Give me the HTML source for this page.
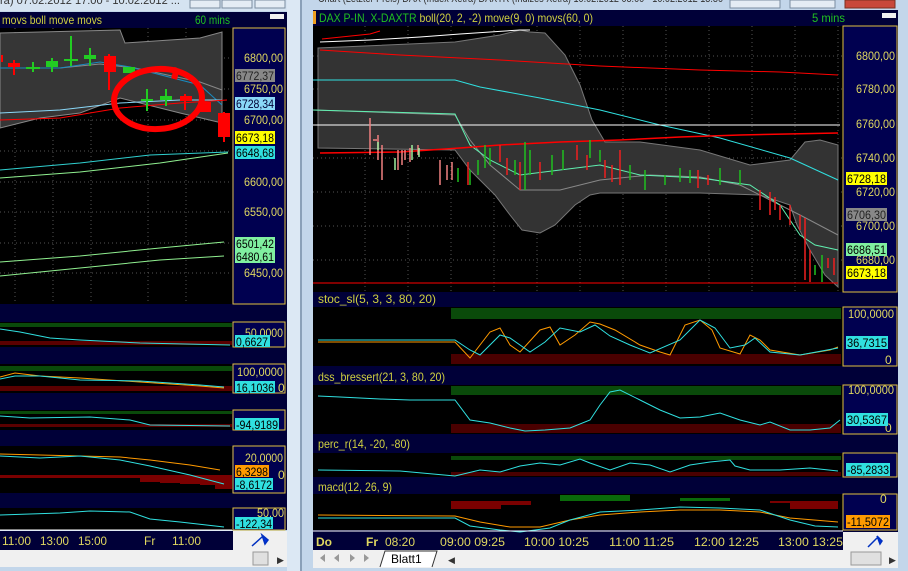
<!DOCTYPE html>
<html><head><meta charset="utf-8"><style>
html,body{margin:0;padding:0;width:908px;height:571px;overflow:hidden;background:#bfd3e8;font-family:"Liberation Sans",sans-serif}
svg{position:absolute;left:0;top:0}
text{font-family:"Liberation Sans",sans-serif}
</style></head><body>
<svg width="908" height="571" viewBox="0 0 908 571">
<rect x="0" y="0" width="908" height="571" fill="#c3d6ea"/>
<rect x="287" y="0" width="14" height="571" fill="#dce8f4"/>
<rect x="300" y="0" width="2" height="571" fill="#8aa0b8"/>
<rect x="898" y="0" width="10" height="571" fill="#c3d6ea"/>
<rect x="0" y="0" width="287" height="11" fill="#d5e3f1"/>
<text x="0" y="4" font-size="11" fill="#333" textLength="180" lengthAdjust="spacingAndGlyphs">ra) 07.02.2012 17:00 - 10.02.2012 ...</text>
<rect x="190" y="0" width="30" height="8" fill="#e4ecf4" stroke="#7a8ca0"/>
<rect x="222" y="0" width="30" height="8" fill="#e4ecf4" stroke="#7a8ca0"/>
<rect x="255" y="0" width="30" height="8" fill="#e4ecf4" stroke="#7a8ca0"/>
<text x="318" y="2" font-size="11" fill="#333" textLength="405" lengthAdjust="spacingAndGlyphs">Chart (Letzter Preis) DAX (Index Xetra) DAXTR (Indizes Xetra) 10.02.2012 08:00 - 10.02.2012 13:30</text>
<rect x="730" y="0" width="50" height="8" fill="#e4ecf4" stroke="#7a8ca0"/>
<rect x="790" y="0" width="45" height="8" fill="#e4ecf4" stroke="#7a8ca0"/>
<rect x="845" y="0" width="50" height="8" fill="#c8483a" stroke="#7a3020"/>

<!-- LEFT -->
<rect x="0" y="12" width="287" height="518" fill="#000038"/>
<text x="2" y="24" font-size="12" fill="#d0d040" textLength="100" lengthAdjust="spacingAndGlyphs">movs boll move movs</text>
<text x="195" y="24" font-size="12" fill="#20c020" textLength="35" lengthAdjust="spacingAndGlyphs">60 mins</text>
<rect x="270" y="14" width="14" height="5" fill="#f0f0f0"/>
<rect x="0" y="28" width="232" height="276" fill="#000"/>
<g stroke="#555" stroke-dasharray="1,3" stroke-width="1">
<line x1="15" y1="28" x2="15" y2="304"/><line x1="53" y1="28" x2="53" y2="304"/><line x1="91" y1="28" x2="91" y2="304"/><line x1="148" y1="28" x2="148" y2="304"/><line x1="186" y1="28" x2="186" y2="304"/>
<line x1="0" y1="58" x2="232" y2="58"/><line x1="0" y1="89" x2="232" y2="89"/><line x1="0" y1="120" x2="232" y2="120"/><line x1="0" y1="151" x2="232" y2="151"/><line x1="0" y1="182" x2="232" y2="182"/><line x1="0" y1="212" x2="232" y2="212"/><line x1="0" y1="243" x2="232" y2="243"/><line x1="0" y1="273" x2="232" y2="273"/>
</g>
<polygon points="0,33 120,30 125,43 200,38 222,32 222,123 180,113 120,98 80,113 40,118 0,128" fill="#363636" stroke="#888"/>
<polyline points="0,68 60,68 100,64 135,68 200,82 222,90" fill="none" stroke="#888"/>
<polyline points="0,68 60,68 100,62 130,67 200,85 222,105" fill="none" stroke="#1a8abf"/>
<polyline points="0,113 60,110 120,103 180,100 222,100" fill="none" stroke="#8ad8f8"/>
<polyline points="0,120 60,118 120,108 180,103 227,100" fill="none" stroke="#f00"/>
<polyline points="0,170 80,163 150,155 228,152" fill="none" stroke="#30d0d0"/>
<polyline points="0,178 80,172 160,163 228,153" fill="none" stroke="#90f090"/>
<polyline points="0,262 80,256 160,248 224,242" fill="none" stroke="#90f090"/>
<polyline points="0,276 80,268 160,260 224,256" fill="none" stroke="#90f090"/>
<g stroke-width="2">
<line x1="2" y1="55" x2="2" y2="62" stroke="#f00"/>
<rect x="8" y="63" width="12" height="4" fill="#f00"/><line x1="14" y1="60" x2="14" y2="75" stroke="#f00"/>
<line x1="33" y1="62" x2="33" y2="72" stroke="#2c2"/><rect x="26" y="67" width="14" height="2" fill="#2c2"/>
<rect x="46" y="61" width="12" height="6" fill="#2c2"/><line x1="52" y1="58" x2="52" y2="72" stroke="#2c2"/>
<line x1="71" y1="36" x2="71" y2="66" stroke="#2c2"/><rect x="64" y="59" width="14" height="2" fill="#2c2"/>
<line x1="90" y1="48" x2="90" y2="66" stroke="#2c2"/><rect x="84" y="55" width="12" height="4" fill="#2c2"/>
<rect x="104" y="56" width="12" height="16" fill="#f00"/><line x1="109" y1="54" x2="109" y2="90" stroke="#f00"/>
<rect x="123" y="67" width="12" height="6" fill="#2c2"/>
<line x1="147" y1="89" x2="147" y2="111" stroke="#2c2"/><rect x="141" y="99" width="12" height="2" fill="#2c2"/>
<line x1="166" y1="89" x2="166" y2="106" stroke="#2c2"/><rect x="160" y="96" width="12" height="4" fill="#2c2"/>
<rect x="180" y="96" width="12" height="5" fill="#f00"/><line x1="185" y1="94" x2="185" y2="110" stroke="#f00"/>
<rect x="199" y="102" width="12" height="10" fill="#f00"/>
<rect x="218" y="113" width="12" height="24" fill="#f00"/><line x1="224" y1="112" x2="224" y2="142" stroke="#f00"/>
</g>
<ellipse cx="158" cy="99" rx="44" ry="30" fill="none" stroke="#f00" stroke-width="6" transform="rotate(-4 158 99)"/>
<path d="M172 72 Q178 66 174 79" stroke="#f00" stroke-width="6" fill="none"/>
<rect x="233" y="28" width="52" height="276" fill="#000050" stroke="#e0c040"/>
<g font-size="12" fill="#e0d860">
<text x="244" y="62" textLength="39" lengthAdjust="spacingAndGlyphs">6800,00</text><text x="244" y="93" textLength="39" lengthAdjust="spacingAndGlyphs">6750,00</text><text x="244" y="124" textLength="39" lengthAdjust="spacingAndGlyphs">6700,00</text><text x="244" y="186" textLength="39" lengthAdjust="spacingAndGlyphs">6600,00</text><text x="244" y="216" textLength="39" lengthAdjust="spacingAndGlyphs">6550,00</text><text x="244" y="277" textLength="39" lengthAdjust="spacingAndGlyphs">6450,00</text>
</g>
<rect x="235" y="69" width="40" height="13" fill="#888"/><text x="236" y="80" font-size="12" fill="#222" textLength="38" lengthAdjust="spacingAndGlyphs">6772,37</text>
<rect x="235" y="97" width="40" height="13" fill="#8ad8f8"/><text x="236" y="108" font-size="12" fill="#003" textLength="38" lengthAdjust="spacingAndGlyphs">6728,34</text>
<rect x="235" y="131" width="40" height="13" fill="#ffff00"/><text x="236" y="142" font-size="12" fill="#000" textLength="38" lengthAdjust="spacingAndGlyphs">6673,18</text>
<rect x="235" y="146" width="40" height="13" fill="#30e0e0"/><text x="236" y="157" font-size="12" fill="#000" textLength="38" lengthAdjust="spacingAndGlyphs">6648,68</text>
<rect x="235" y="237" width="40" height="13" fill="#80f0a0"/><text x="236" y="248" font-size="12" fill="#000" textLength="38" lengthAdjust="spacingAndGlyphs">6501,42</text>
<rect x="235" y="250" width="40" height="13" fill="#80f0a0"/><text x="236" y="261" font-size="12" fill="#000" textLength="38" lengthAdjust="spacingAndGlyphs">6480,61</text>

<rect x="0" y="322" width="232" height="25" fill="#000"/>
<rect x="0" y="323" width="232" height="4" fill="#0a4a0a"/><rect x="0" y="341" width="232" height="4" fill="#5a0000"/>
<polyline points="0,329 20,332 50,338 80,340 140,343 230,345" fill="none" stroke="#30e0e0"/>
<rect x="233" y="322" width="52" height="25" fill="#000050" stroke="#e0c040"/>
<text x="245" y="337" font-size="12" fill="#e0d860" textLength="38" lengthAdjust="spacingAndGlyphs">50,0000</text>
<rect x="235" y="335" width="35" height="12" fill="#30e0e0"/><text x="236" y="346" font-size="12" fill="#000" textLength="32" lengthAdjust="spacingAndGlyphs">0,6627</text>

<rect x="0" y="364" width="232" height="29" fill="#000"/>
<rect x="0" y="366" width="232" height="5" fill="#0a4a0a"/><rect x="0" y="386" width="232" height="5" fill="#5a0000"/>
<polyline points="0,377 15,373 40,376 80,378 140,382 200,386 224,388" fill="none" stroke="#ff9a00"/>
<polyline points="0,379 15,376 40,376 80,380 140,381 200,385 224,387" fill="none" stroke="#30e0e0"/>
<rect x="233" y="364" width="52" height="29" fill="#000050" stroke="#e0c040"/>
<text x="237" y="376" font-size="12" fill="#e0d860" textLength="46" lengthAdjust="spacingAndGlyphs">100,0000</text><text x="278" y="392" font-size="12" fill="#e0d860">0</text>
<rect x="235" y="381" width="40" height="12" fill="#30e0e0"/><text x="236" y="392" font-size="12" fill="#000" textLength="38" lengthAdjust="spacingAndGlyphs">16,1036</text>

<rect x="0" y="410" width="232" height="20" fill="#000"/>
<rect x="0" y="411" width="232" height="3" fill="#0a4a0a"/><rect x="0" y="424" width="232" height="3" fill="#5a0000"/>
<polyline points="0,416 30,418 90,417 130,420 150,425 230,426" fill="none" stroke="#30e0e0"/>
<rect x="233" y="410" width="52" height="20" fill="#000050" stroke="#e0c040"/>
<rect x="235" y="418" width="44" height="12" fill="#30e0e0"/><text x="236" y="429" font-size="12" fill="#000" textLength="42" lengthAdjust="spacingAndGlyphs">-94,9189</text>

<rect x="0" y="446" width="232" height="47" fill="#000"/>
<g fill="#7a0000"><rect x="0" y="475" width="140" height="3"/><rect x="140" y="475" width="20" height="7"/><rect x="160" y="475" width="20" height="8"/><rect x="180" y="475" width="20" height="9"/><rect x="200" y="475" width="15" height="10"/><rect x="215" y="475" width="17" height="14"/></g>
<polyline points="0,454 40,455 80,456 120,457 150,460 190,465 220,470" fill="none" stroke="#ff9a00"/>
<polyline points="0,456 40,458 80,456 120,460 150,466 190,475 224,484" fill="none" stroke="#30e0e0"/>
<rect x="233" y="446" width="52" height="47" fill="#000050" stroke="#e0c040"/>
<text x="245" y="462" font-size="12" fill="#e0d860" textLength="38" lengthAdjust="spacingAndGlyphs">20,0000</text><text x="278" y="479" font-size="12" fill="#e0d860">0</text>
<rect x="235" y="465" width="34" height="12" fill="#ff9a00"/><text x="236" y="476" font-size="12" fill="#000" textLength="32" lengthAdjust="spacingAndGlyphs">6,3298</text>
<rect x="235" y="478" width="38" height="12" fill="#30e0e0"/><text x="236" y="489" font-size="12" fill="#000" textLength="36" lengthAdjust="spacingAndGlyphs">-8,6172</text>

<rect x="0" y="508" width="232" height="22" fill="#000"/>
<polyline points="0,515 60,513 90,511 130,512 150,519 180,522 224,527" fill="none" stroke="#30e0e0"/>
<rect x="233" y="508" width="52" height="22" fill="#000050" stroke="#e0c040"/>
<text x="257" y="517" font-size="12" fill="#e0d860" textLength="27" lengthAdjust="spacingAndGlyphs">50,00</text>
<rect x="235" y="517" width="38" height="12" fill="#30e0e0"/><text x="236" y="528" font-size="12" fill="#000" textLength="36" lengthAdjust="spacingAndGlyphs">-122,34</text>
<line x1="0" y1="530" x2="232" y2="530" stroke="#fff"/>
<rect x="0" y="531" width="233" height="19" fill="#000038"/>
<g font-size="12" fill="#e0d860"><text x="2" y="545" textLength="29" lengthAdjust="spacingAndGlyphs">11:00</text><text x="40" y="545" textLength="29" lengthAdjust="spacingAndGlyphs">13:00</text><text x="78" y="545" textLength="29" lengthAdjust="spacingAndGlyphs">15:00</text><text x="144" y="545">Fr</text><text x="172" y="545" textLength="29" lengthAdjust="spacingAndGlyphs">11:00</text></g>
<rect x="233" y="531" width="54" height="19" fill="#f0f0f0"/>
<path d="M252 546 L262 537 M262 535 L268 540 L265 544 Z" stroke="#0030c0" stroke-width="1.5" fill="#0030e0"/>
<rect x="0" y="550" width="287" height="17" fill="#f0f0f0"/>
<rect x="253" y="552" width="15" height="13" fill="#e0e0e0" stroke="#999"/>
<text x="277" y="563" font-size="9" fill="#333">▶</text>

<!-- RIGHT -->
<rect x="313" y="10" width="585" height="540" fill="#000038"/>
<rect x="313" y="11" width="3" height="13" fill="#f0a020"/>
<text x="319" y="22" font-size="12" textLength="274" lengthAdjust="spacingAndGlyphs"><tspan fill="#20c020">DAX P-IN. X-DAXTR </tspan><tspan fill="#d0d040">boll(20, 2, -2) move(9, 0) movs(60, 0)</tspan></text>
<text x="812" y="22" font-size="12" fill="#20c020" textLength="33" lengthAdjust="spacingAndGlyphs">5 mins</text>
<rect x="882" y="13" width="14" height="5" fill="#f0f0f0"/>
<rect x="313" y="26" width="530" height="266" fill="#000"/>
<g stroke="#555" stroke-dasharray="1,3">
<line x1="365" y1="26" x2="365" y2="292"/><line x1="408" y1="26" x2="408" y2="292"/><line x1="451" y1="26" x2="451" y2="292"/><line x1="494" y1="26" x2="494" y2="292"/><line x1="537" y1="26" x2="537" y2="292"/><line x1="580" y1="26" x2="580" y2="292"/><line x1="623" y1="26" x2="623" y2="292"/><line x1="666" y1="26" x2="666" y2="292"/><line x1="709" y1="26" x2="709" y2="292"/><line x1="752" y1="26" x2="752" y2="292"/><line x1="795" y1="26" x2="795" y2="292"/><line x1="838" y1="26" x2="838" y2="292"/>
<line x1="313" y1="56" x2="843" y2="56"/><line x1="313" y1="89" x2="843" y2="89"/><line x1="313" y1="158" x2="843" y2="158"/><line x1="313" y1="192" x2="843" y2="192"/><line x1="313" y1="226" x2="843" y2="226"/><line x1="313" y1="260" x2="843" y2="260"/>
</g>
<polygon points="318,48 455,42 500,35 520,30 530,32 545,33 565,55 580,85 592,120 605,142 640,142 700,150 750,165 790,160 805,142 820,140 838,145 838,287 825,275 810,250 797,225 790,205 760,195 700,193 650,193 600,193 590,195 575,205 555,225 540,233 522,230 510,215 495,195 470,170 455,150 318,148" fill="#333" stroke="#777"/>
<polyline points="320,42 370,40 420,37 460,34 520,30 530,30" fill="none" stroke="#fff"/>
<polyline points="322,39 370,34 380,31" fill="none" stroke="#f00"/>
<polyline points="320,50 400,55 500,60 600,66 700,70 780,72 838,75" fill="none" stroke="#f00"/>
<polyline points="313,80 455,80 480,87 540,98 600,110 660,125 720,138 790,158 838,180" fill="none" stroke="#30e0e0"/>
<polyline points="313,110 455,115 470,140 490,165 520,190 560,190 600,180 650,175 700,177 740,185 770,200 800,215 838,235" fill="none" stroke="#888"/>
<polyline points="313,110 455,114 470,145 490,160 520,175 560,170 600,165 640,175 700,178 750,185 780,205 800,235 815,245 838,250" fill="none" stroke="#60f0b0"/>
<line x1="313" y1="125" x2="840" y2="125" stroke="#fff"/>
<polyline points="320,153 400,152 460,148 500,145 560,142 620,140 680,137 740,135 838,133" fill="none" stroke="#f00" stroke-width="1.5"/>
<line x1="313" y1="283" x2="838" y2="283" stroke="#f00"/>
<g stroke-width="1.5" fill="none">
<path d="M370 118 V155 M373 140 H377 M378 135 V160 M382 145 V180 M398 150 V170 M402 150 V165 M405 150 V160 M410 148 V162 M418 145 V155 M440 160 V185 M447 165 V180 M452 162 V180" stroke="#f08080"/>
<path d="M378 142 V150 M395 158 V170 M412 145 V160 M419 148 V157" stroke="#a0f0a0"/>
<path d="M458 168 V182 M470 170 V185 M478 160 V175 M485 145 V168 M490 148 V165 M515 160 V175 M525 142 V190 M530 150 V175 M552 155 V175 M563 150 V170 M590 140 V158 M600 150 V162 M630 165 V180 M645 170 V190 M665 175 V185 M680 168 V182 M690 170 V183 M720 168 V185 M740 170 V185 M815 265 V275 M822 255 V282" stroke="#20c020"/>
<path d="M468 162 V185 M500 145 V162 M507 158 V175 M520 162 V190 M540 162 V180 M577 145 V160 M587 155 V170 M605 160 V178 M612 165 V182 M620 150 V185 M698 170 V188 M708 175 V185 M760 190 V210 M770 192 V215 M775 197 V210 M780 205 V220 M790 205 V225 M800 215 V230 M805 218 V280 M810 250 V282 M828 258 V268 M834 258 V275" stroke="#f02020"/>
</g>
<rect x="843" y="26" width="54" height="266" fill="#000050" stroke="#e0c040"/>
<g font-size="12" fill="#e0d860">
<text x="856" y="60" textLength="39" lengthAdjust="spacingAndGlyphs">6800,00</text><text x="856" y="93" textLength="39" lengthAdjust="spacingAndGlyphs">6780,00</text><text x="856" y="128" textLength="39" lengthAdjust="spacingAndGlyphs">6760,00</text><text x="856" y="162" textLength="39" lengthAdjust="spacingAndGlyphs">6740,00</text><text x="856" y="196" textLength="39" lengthAdjust="spacingAndGlyphs">6720,00</text><text x="856" y="230" textLength="39" lengthAdjust="spacingAndGlyphs">6700,00</text><text x="856" y="264" textLength="39" lengthAdjust="spacingAndGlyphs">6680,00</text>
</g>
<rect x="846" y="172" width="41" height="13" fill="#ffff00"/><text x="847" y="183" font-size="12" fill="#000" textLength="39" lengthAdjust="spacingAndGlyphs">6728,18</text>
<rect x="846" y="208" width="41" height="13" fill="#888"/><text x="847" y="219" font-size="12" fill="#222" textLength="39" lengthAdjust="spacingAndGlyphs">6706,30</text>
<rect x="846" y="243" width="41" height="13" fill="#80f0a0"/><text x="847" y="254" font-size="12" fill="#000" textLength="39" lengthAdjust="spacingAndGlyphs">6686,51</text>
<rect x="846" y="266" width="41" height="13" fill="#ffff00"/><text x="847" y="277" font-size="12" fill="#000" textLength="39" lengthAdjust="spacingAndGlyphs">6673,18</text>

<text x="318" y="303" font-size="12" fill="#d0d040" textLength="118" lengthAdjust="spacingAndGlyphs">stoc_sl(5, 3, 3, 80, 20)</text>
<rect x="313" y="307" width="530" height="59" fill="#000"/>
<rect x="451" y="308" width="390" height="11" fill="#0a4a0a"/><rect x="451" y="354" width="390" height="10" fill="#4a0000"/>
<polyline points="318,342 455,342 470,358 490,332 500,328 510,345 520,352 540,330 550,327 560,345 575,335 590,322 600,324 615,330 640,345 660,352 670,355 685,325 700,320 712,330 720,348 740,354 750,335 760,340 770,350 800,355 830,350 838,347" fill="none" stroke="#ff9a00"/>
<polyline points="318,340 455,340 470,350 480,355 500,335 510,338 530,352 545,342 560,328 580,332 595,325 610,336 630,345 650,353 680,340 700,320 715,328 730,348 745,345 755,338 770,352 800,355 838,348" fill="none" stroke="#30e0e0"/>
<rect x="843" y="307" width="54" height="59" fill="#000050" stroke="#e0c040"/>
<text x="848" y="318" font-size="12" fill="#e0d860" textLength="46" lengthAdjust="spacingAndGlyphs">100,0000</text><text x="885" y="364" font-size="12" fill="#e0d860">0</text>
<rect x="846" y="336" width="42" height="13" fill="#30e0e0"/><text x="847" y="347" font-size="12" fill="#000" textLength="40" lengthAdjust="spacingAndGlyphs">36,7315</text>

<text x="318" y="381" font-size="12" fill="#d0d040" textLength="127" lengthAdjust="spacingAndGlyphs">dss_bressert(21, 3, 80, 20)</text>
<rect x="313" y="385" width="530" height="49" fill="#000"/>
<rect x="451" y="386" width="390" height="9" fill="#0a4a0a"/><rect x="451" y="424" width="390" height="9" fill="#4a0000"/>
<polyline points="318,396 340,397 380,399 410,400 455,400 470,420 490,423 510,428 525,431 545,430 570,428 590,420 600,405 610,392 620,390 640,400 660,410 680,418 700,417 720,413 740,420 760,425 770,422 790,430 810,430 830,428 840,420" fill="none" stroke="#30e0e0"/>
<rect x="843" y="385" width="54" height="49" fill="#000050" stroke="#e0c040"/>
<text x="848" y="394" font-size="12" fill="#e0d860" textLength="46" lengthAdjust="spacingAndGlyphs">100,0000</text><text x="885" y="432" font-size="12" fill="#e0d860">0</text>
<rect x="846" y="413" width="42" height="13" fill="#30e0e0"/><text x="847" y="424" font-size="12" fill="#000" textLength="40" lengthAdjust="spacingAndGlyphs">30,5367</text>

<text x="318" y="448" font-size="12" fill="#d0d040" textLength="92" lengthAdjust="spacingAndGlyphs">perc_r(14, -20, -80)</text>
<rect x="313" y="453" width="530" height="24" fill="#000"/>
<rect x="451" y="456" width="390" height="4" fill="#0a4a0a"/><rect x="451" y="472" width="390" height="4" fill="#4a0000"/>
<polyline points="318,470 400,471 455,476 480,470 500,472 520,466 540,463 560,465 580,459 590,463 610,470 630,463 650,465 670,472 690,465 710,462 730,460 735,466 750,470 780,470 810,468 838,471" fill="none" stroke="#30e0e0"/>
<rect x="843" y="453" width="54" height="24" fill="#000050" stroke="#e0c040"/>
<rect x="846" y="463" width="44" height="13" fill="#30e0e0"/><text x="847" y="474" font-size="12" fill="#000" textLength="42" lengthAdjust="spacingAndGlyphs">-85,2833</text>

<text x="318" y="491" font-size="12" fill="#d0d040" textLength="74" lengthAdjust="spacingAndGlyphs">macd(12, 26, 9)</text>
<rect x="313" y="494" width="530" height="36" fill="#000"/>
<g fill="#7a0000"><rect x="451" y="501" width="50" height="8"/><rect x="501" y="501" width="30" height="4"/><rect x="770" y="501" width="20" height="2"/><rect x="790" y="501" width="48" height="8"/></g>
<g fill="#0a6a0a"><rect x="560" y="495" width="70" height="6"/><rect x="680" y="498" width="50" height="3"/></g>
<polyline points="318,515 455,516 480,522 510,527 540,527 570,520 600,515 640,512 680,510 720,510 760,512 790,518 838,522" fill="none" stroke="#ff9a00"/>
<polyline points="318,518 455,518 470,526 500,530 520,532 550,528 570,520 600,512 640,510 680,507 720,508 760,510 790,520 815,526 838,527" fill="none" stroke="#30e0e0"/>
<rect x="843" y="494" width="54" height="36" fill="#000050" stroke="#e0c040"/>
<text x="880" y="503" font-size="12" fill="#e0d860">0</text>
<rect x="846" y="515" width="44" height="13" fill="#ff9a00"/><text x="847" y="526" font-size="12" fill="#000" textLength="42" lengthAdjust="spacingAndGlyphs">-11,5072</text>
<line x1="313" y1="531" x2="843" y2="531" stroke="#fff"/>
<g font-size="12" fill="#e0d860">
<text x="316" y="546" font-weight="bold">Do</text><text x="366" y="546" font-weight="bold">Fr</text><text x="385" y="546" textLength="30" lengthAdjust="spacingAndGlyphs">08:20</text>
<text x="440" y="546" textLength="65" lengthAdjust="spacingAndGlyphs">09:00 09:25</text><text x="524" y="546" textLength="65" lengthAdjust="spacingAndGlyphs">10:00 10:25</text><text x="609" y="546" textLength="65" lengthAdjust="spacingAndGlyphs">11:00 11:25</text><text x="694" y="546" textLength="65" lengthAdjust="spacingAndGlyphs">12:00 12:25</text><text x="778" y="546" textLength="65" lengthAdjust="spacingAndGlyphs">13:00 13:25</text>
</g>
<rect x="843" y="532" width="55" height="18" fill="#f0f0f0"/>
<path d="M868 547 L877 538 M877 536 L882 541 L880 544 Z" stroke="#0030c0" stroke-width="1.5" fill="#0030e0"/>
<rect x="313" y="550" width="585" height="18" fill="#f0f0f0"/>
<g fill="#999"><path d="M320 558 L325 554 V562Z M334 558 L339 554 V562Z M350 554 L355 558 L350 562Z M364 554 L369 558 L364 562Z"/></g>
<path d="M380 567 L385 551 H437 L432 567" fill="#fff" stroke="#333"/>
<text x="391" y="563" font-size="12" fill="#000">Blatt1</text>
<rect x="851" y="552" width="30" height="13" fill="#e0e0e0" stroke="#999"/>
<text x="889" y="563" font-size="9" fill="#333">▶</text>
<text x="448" y="563" font-size="9" fill="#333">◀</text>
</svg>
</body></html>
